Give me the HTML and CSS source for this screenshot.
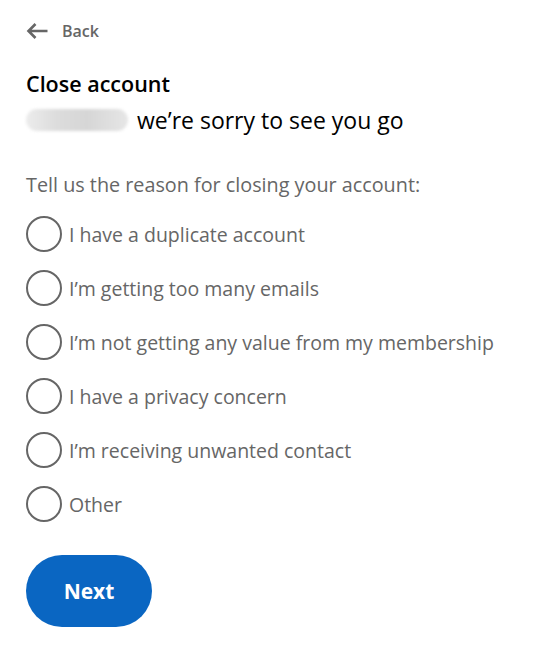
FILE: index.html
```html
<!DOCTYPE html>
<html lang="en">
<head>
<meta charset="utf-8">
<link rel="stylesheet" href="styles.css">
</head>
<body>
<main class="page">
  <a class="back" href="#">
    <svg class="back-icon" width="22" height="24" viewBox="0 0 22 24" aria-hidden="true">
      <path d="M21.5 12H2.5M9.5 5L2.5 12L9.5 19" fill="none" stroke="#666" stroke-width="2.6"/>
    </svg>
    <span>Back</span>
  </a>
  <h1 class="title">Close account</h1>
  <p class="subtitle"><span class="name-blur"></span> we’re sorry to see you go</p>
  <p class="prompt">Tell us the reason for closing your account:</p>
  <ul class="options">
    <li class="option"><span class="radio"></span><span class="label">I have a duplicate account</span></li>
    <li class="option"><span class="radio"></span><span class="label">I’m getting too many emails</span></li>
    <li class="option"><span class="radio"></span><span class="label">I’m not getting any value from my membership</span></li>
    <li class="option"><span class="radio"></span><span class="label">I have a privacy concern</span></li>
    <li class="option"><span class="radio"></span><span class="label">I’m receiving unwanted contact</span></li>
    <li class="option"><span class="radio"></span><span class="label">Other</span></li>
  </ul>
  <button class="next" type="button">Next</button>
</main>
</body>
</html>
```
FILE: styles.css
```css
* { box-sizing: border-box; }
html, body { margin: 0; padding: 0; background: #fff; }
body { font-family: "Open Sans", "Noto Sans", sans-serif; color: #000; }
.page { padding: 19px 26px 0 26px; display: flex; flex-direction: column; align-items: flex-start; }
.back { display: flex; align-items: center; gap: 14px; text-decoration: none; color: #666; font-size: 16px; font-weight: 600; height: 24px; }
.title { margin: 27px 0 0 0; font-size: 21.5px; font-weight: 600; line-height: 28px; color: #000; }
.subtitle { margin: 6px 0 0 0; font-size: 23px; line-height: 32px; color: #000; display: flex; align-items: center; gap: 9px; }
.name-blur { display: inline-block; width: 102px; height: 22px; border-radius: 11px; background: linear-gradient(90deg, #ececec 0%, #dcdcdc 30%, #d6d6d6 60%, #e6e6e6 100%); filter: blur(1.5px); }
.prompt { margin: 35px 0 0 0; font-size: 19.8px; line-height: 28px; color: #666; }
.options { list-style: none; margin: 17px 0 0 0; padding: 0; display: flex; flex-direction: column; gap: 18px; }
.option { display: flex; align-items: center; gap: 7px; height: 36px; }
.radio { width: 36px; height: 36px; border: 2px solid #666; border-radius: 50%; flex: none; }
.label { font-size: 19.5px; color: #666; }
.next { margin-top: 33px; width: 126px; height: 72px; border: none; border-radius: 36px; background: #0a66c2; color: #fff; font-family: inherit; font-size: 21px; font-weight: 700; }
```
